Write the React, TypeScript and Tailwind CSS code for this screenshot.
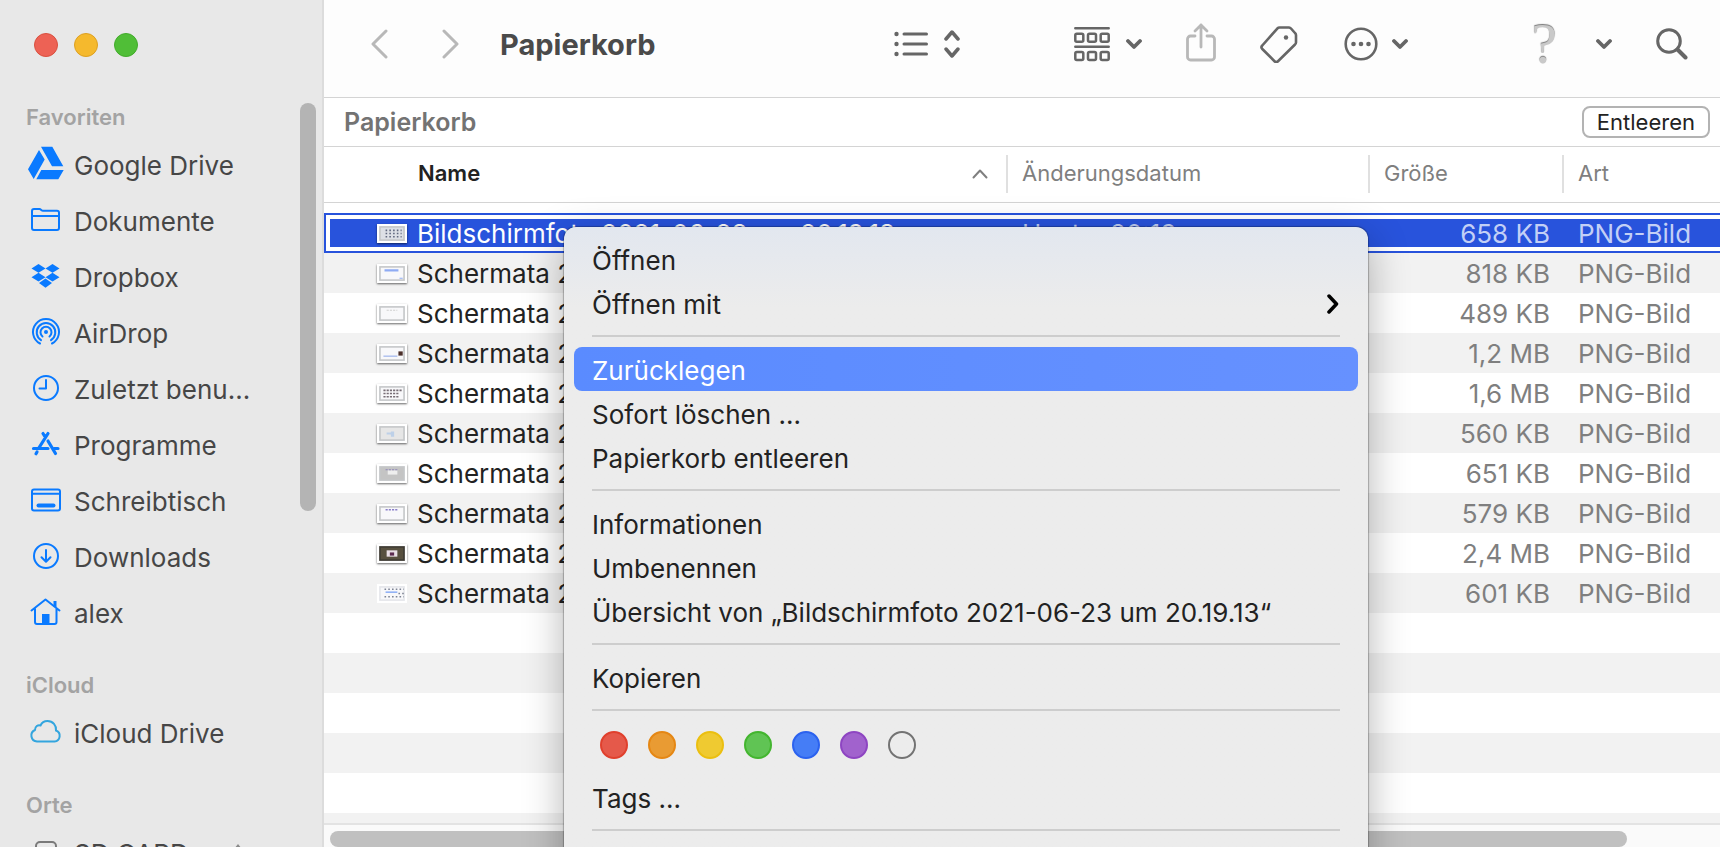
import type { ReactNode } from "react";

const favorites = [
  { label: "Google Drive", icon: <GoogleDriveIcon /> },
  { label: "Dokumente", icon: <FolderIcon /> },
  { label: "Dropbox", icon: <DropboxIcon /> },
  { label: "AirDrop", icon: <AirDropIcon /> },
  { label: "Zuletzt benu...", icon: <ClockIcon /> },
  { label: "Programme", icon: <AppsIcon /> },
  { label: "Schreibtisch", icon: <DesktopIcon /> },
  { label: "Downloads", icon: <DownloadIcon /> },
  { label: "alex", icon: <HomeIcon /> },
];

const files = [
  { name: "Bildschirmfoto 2021-06-23 um 20.19.13", date: "Heute, 20:19", size: "658 KB", thumb: "grid" },
  { name: "Schermata 2021-06-23 um 20.16.02", date: "Heute, 20:16", size: "818 KB", thumb: "bar" },
  { name: "Schermata 2021-06-23 um 20.14.41", date: "Heute, 20:14", size: "489 KB", thumb: "plain" },
  { name: "Schermata 2021-06-23 um 20.12.27", date: "Heute, 20:12", size: "1,2 MB", thumb: "photo" },
  { name: "Schermata 2021-06-23 um 20.11.50", date: "Heute, 20:11", size: "1,6 MB", thumb: "apps" },
  { name: "Schermata 2021-06-23 um 20.09.33", date: "Heute, 20:09", size: "560 KB", thumb: "pale" },
  { name: "Schermata 2021-06-23 um 20.08.18", date: "Heute, 20:08", size: "651 KB", thumb: "gray" },
  { name: "Schermata 2021-06-23 um 20.07.05", date: "Heute, 20:07", size: "579 KB", thumb: "dots" },
  { name: "Schermata 2021-06-23 um 20.05.44", date: "Heute, 20:05", size: "2,4 MB", thumb: "dark" },
  { name: "Schermata 2021-06-23 um 20.03.12", date: "Heute, 20:03", size: "601 KB", thumb: "menu" },
];

const tags = [
  { label: "Rot", color: "bg-[#e5594a] border-[#e0402d]" },
  { label: "Orange", color: "bg-[#e99b33] border-[#e58714]" },
  { label: "Gelb", color: "bg-[#efca31] border-[#ebbf10]" },
  { label: "Grün", color: "bg-[#60c454] border-[#43b52f]" },
  { label: "Blau", color: "bg-[#457df6] border-[#2b62ef]" },
  { label: "Violett", color: "bg-[#a162cd] border-[#8e45c2]" },
  { label: "Kein Tag", color: "border-[#737373]" },
];

export default function App() {
  return (
    <div className="flex h-screen overflow-hidden bg-white font-[Inter,sans-serif] text-[#262626]">
      <Sidebar />
      <main className="flex min-w-0 flex-1 flex-col">
        <Toolbar />
        <div className="flex h-[49px] shrink-0 items-center justify-between border-b border-[#d4d4d4] pr-2.5 pl-5">
          <h2 className="pt-0.5 text-[25px] font-semibold text-[#737373]">Papierkorb</h2>
          <button className="h-8 rounded-lg border-2 border-[#b3b3b3] px-[13px] text-[22px] leading-7 text-[#222]">
            Entleeren
          </button>
        </div>
        <FileTable />
        <div className="h-6 shrink-0 border-t-2 border-[#e3e3e3] bg-[#fafafa] pt-1.5 pl-1.5">
          <div className="h-4 w-14/15 rounded-full bg-[#c0c0c0]" />
        </div>
      </main>
      <ContextMenu />
    </div>
  );
}

function Sidebar() {
  return (
    <aside className="relative w-[324px] shrink-0 overflow-hidden border-r-2 border-[#dcdcdc] bg-[#e8e8e8]">
      <div className="flex gap-4 pt-[33px] pb-[41px] pl-[34px]">
        <button aria-label="Schließen" className="size-6 rounded-full border border-[#d9503f] bg-[#ed6255]" />
        <button aria-label="Minimieren" className="size-6 rounded-full border border-[#dda021] bg-[#f5b92d]" />
        <button aria-label="Zoomen" className="size-6 rounded-full border border-[#42ab2b] bg-[#50be37]" />
      </div>
      <nav className="flex flex-col gap-[26px]">
        <Section title="Favoriten">
          {favorites.map((item) => (
            <SidebarItem key={item.label} icon={item.icon} label={item.label} />
          ))}
        </Section>
        <Section title="iCloud">
          <SidebarItem icon={<CloudIcon />} label="iCloud Drive" />
        </Section>
        <Section title="Orte">
          <SidebarItem icon={<DiskIcon />} label="SD CARD">
            <svg width="20" height="20" viewBox="0 0 20 20" fill="#8a8a8a" className="mr-[74px] ml-auto">
              <path d="M10 2l8 10H2zM2 14h16v3H2z" />
            </svg>
          </SidebarItem>
        </Section>
      </nav>
      <div className="absolute top-[103px] right-[6px] h-[408px] w-4 rounded-full bg-[#b4b4b4]" />
    </aside>
  );
}

function Section({ title, children }: { title: string; children: ReactNode }) {
  return (
    <section>
      <h3 className="flex h-[38px] items-center pl-[26px] text-[22px] font-semibold text-[#a3a3a3]">{title}</h3>
      <ul>{children}</ul>
    </section>
  );
}

function SidebarItem({ icon, label, children }: { icon: ReactNode; label: string; children?: ReactNode }) {
  return (
    <li>
      <a href="#" className="flex h-14 items-center gap-[9px] pl-7 text-[26px] text-[#464646]">
        {icon}
        <span className="pt-0.5">{label}</span>
        {children}
      </a>
    </li>
  );
}

function Toolbar() {
  return (
    <header className="flex h-[98px] shrink-0 items-center border-b border-[#d4d4d4] bg-[#fdfdfd] pr-8 pb-2.5 pl-[46px] text-[#666]">
      <button aria-label="Zurück" className="text-[#b8b8b8]">
        <svg width="18" height="32" viewBox="0 0 18 32" {...line} strokeWidth="3">
          <path d="M16 3L3 16l13 13" />
        </svg>
      </button>
      <button aria-label="Vorwärts" className="ml-[54px] text-[#b8b8b8]">
        <svg width="18" height="32" viewBox="0 0 18 32" {...line} strokeWidth="3">
          <path d="M2 3l13 13L2 29" />
        </svg>
      </button>
      <h1 className="ml-10 pt-0.5 text-[29px] font-bold text-[#4a4a4a]">Papierkorb</h1>

      <button aria-label="Darstellung" className="ml-auto flex items-center gap-4">
        <svg width="34" height="28" viewBox="0 0 34 28" {...line} strokeWidth="3">
          <path d="M10 4h22.500M10 14h22.500M10 24h22.500" />
          <g fill="currentColor" stroke="none">
            <circle cx="2.500" cy="4" r="2.200" />
            <circle cx="2.500" cy="14" r="2.200" />
            <circle cx="2.500" cy="24" r="2.200" />
          </g>
        </svg>
        <svg width="16" height="28" viewBox="0 0 16 28" {...line} strokeWidth="3.500">
          <path d="M2 9l6-7 6 7M2 19l6 7 6-7" />
        </svg>
      </button>
      <button aria-label="Gruppieren" className="ml-[114px] flex items-center gap-4">
        <svg width="36" height="36" viewBox="0 0 36 36" {...line} strokeWidth="2.500">
          <path d="M1.300 2.300h33.400M1.300 20.800h33.400" />
          <rect x="1.300" y="7.800" width="8" height="8" rx="1.500" />
          <rect x="14" y="7.800" width="8" height="8" rx="1.500" />
          <rect x="26.700" y="7.800" width="8" height="8" rx="1.500" />
          <rect x="1.300" y="26" width="8" height="8" rx="1.500" />
          <rect x="14" y="26" width="8" height="8" rx="1.500" />
          <rect x="26.700" y="26" width="8" height="8" rx="1.500" />
        </svg>
        <ChevronDown />
      </button>
      <button aria-label="Teilen" className="ml-11 pb-1 text-[#b8b8b8]">
        <svg width="30" height="40" viewBox="0 0 30 40" {...line} strokeWidth="2.800">
          <path d="M9 14H4.500a3 3 0 0 0-3 3v18a3 3 0 0 0 3 3h21a3 3 0 0 0 3-3V17a3 3 0 0 0-3-3H21" />
          <path d="M15 25V3M9 9l6-6 6 6" />
        </svg>
      </button>
      <button aria-label="Tags" className="ml-11">
        <svg width="38" height="38" viewBox="0 0 38 38" {...line} strokeWidth="2.600">
          <path d="M19.500 2.500h9.500a3 3 0 0 1 2 1l4 4.500a3 3 0 0 1 1 2v7.500a3 3 0 0 1-1 2L18 36.200a2.500 2.500 0 0 1-3.500 0L2.300 24a2.500 2.500 0 0 1 0-3.500L17.500 3.300a3 3 0 0 1 2-.8z" />
          <circle cx="26" cy="12.500" r="2.200" fill="currentColor" stroke="none" />
        </svg>
      </button>
      <button aria-label="Aktionen" className="ml-[46px] flex items-center gap-3.5">
        <svg width="34" height="34" viewBox="0 0 34 34" {...line} strokeWidth="2.600">
          <circle cx="17" cy="17" r="15.300" />
          <g fill="currentColor" stroke="none">
            <circle cx="9.500" cy="17" r="2.300" />
            <circle cx="17" cy="17" r="2.300" />
            <circle cx="24.500" cy="17" r="2.300" />
          </g>
        </svg>
        <ChevronDown />
      </button>
      <button
        aria-label="Hilfe"
        className="ml-[120px] w-8 font-['Liberation_Serif',serif] text-[58px] leading-10 text-[#c9c9c9] [text-shadow:0_-1px_1px_#777]"
      >
        ?
      </button>
      <button aria-label="Weitere" className="ml-9">
        <ChevronDown />
      </button>
      <button aria-label="Suchen" className="ml-11">
        <svg width="32" height="34" viewBox="0 0 32 34" {...line} strokeWidth="3">
          <circle cx="13" cy="14" r="11.300" />
          <path d="M21.500 22.500l8 8" strokeWidth="4" />
        </svg>
      </button>
    </header>
  );
}

function FileTable() {
  return (
    <div className="min-h-0 flex-1 overflow-hidden">
      <table className="w-full table-fixed border-separate border-spacing-0 text-left text-[26px] text-[#7f7f7f]">
        <thead className="text-[22px]">
          <tr className="h-14">
            <th className="border-b border-[#d4d4d4] p-0 pb-0.5 font-semibold text-[#222]">
              <div className="flex items-center justify-between pr-[18px] pl-[94px]">
                Name
                <svg width="16" height="10" viewBox="0 0 16 10" {...line} strokeWidth="2" className="text-[#7f7f7f]">
                  <path d="M1.500 8.500L8 1.500l6.500 7" />
                </svg>
              </div>
            </th>
            <HeaderCell width="w-[362px]">Änderungsdatum</HeaderCell>
            <HeaderCell width="w-[194px]">Größe</HeaderCell>
            <HeaderCell width="w-[158px]">Art</HeaderCell>
          </tr>
        </thead>
        <tbody>
          <tr className="h-2.5" aria-hidden="true">
            <td colSpan={4} className="p-0" />
          </tr>
          {files.map((file, i) =>
            i === 0 ? (
              <tr key={file.name} className="h-10 leading-[30px] text-[#c3d0f6]">
                <td className="border-y-2 border-l-2 border-[#2853dc] py-1 pr-0 pl-1">
                  <div className="flex h-7 items-center gap-2.5 bg-[#2853dc] pl-[47px] whitespace-nowrap text-white">
                    <Thumb kind={file.thumb} />
                    <span className="pt-0.5">{file.name}</span>
                  </div>
                </td>
                <td className="border-y-2 border-[#2853dc] px-0 py-1">
                  <div className="h-7 bg-[#2853dc] pl-4">{file.date}</div>
                </td>
                <td className="border-y-2 border-[#2853dc] px-0 py-1">
                  <div className="h-7 bg-[#2853dc] pr-3 text-right">{file.size}</div>
                </td>
                <td className="border-y-2 border-[#2853dc] px-0 py-1">
                  <div className="h-7 bg-[#2853dc] pl-4">PNG-Bild</div>
                </td>
              </tr>
            ) : (
              <tr key={file.name} className="h-10 leading-7 odd:bg-[#f2f2f2]">
                <td className="p-0">
                  <div className="flex items-center gap-2.5 pl-[53px] whitespace-nowrap text-[#222]">
                    <Thumb kind={file.thumb} />
                    <span className="pt-0.5">{file.name}</span>
                  </div>
                </td>
                <td className="pt-0.5 pb-0 pl-4">{file.date}</td>
                <td className="pt-0.5 pr-3 pb-0 text-right">{file.size}</td>
                <td className="pt-0.5 pr-0 pb-0 pl-4">PNG-Bild</td>
              </tr>
            ),
          )}
          {[0, 1, 2, 3, 4, 5].map((n) => (
            <tr key={n} className="h-10 odd:bg-[#f2f2f2]" aria-hidden="true">
              <td colSpan={4} className="p-0" />
            </tr>
          ))}
        </tbody>
      </table>
    </div>
  );
}

function HeaderCell({ width, children }: { width: string; children: ReactNode }) {
  return (
    <th className={`border-b border-[#d4d4d4] p-0 pb-0.5 font-normal ${width}`}>
      <div className="h-[38px] border-l-2 border-[#e0e0e0] pl-3.5 leading-9">{children}</div>
    </th>
  );
}

function ContextMenu() {
  return (
    <div
      role="menu"
      className="absolute top-[227px] left-[564px] h-[660px] w-[804px] rounded-xl bg-[#ececec] bg-linear-to-b from-[#e2e7ef] to-[#ececec] to-[80px] px-2.5 pt-2.5 text-[26px] shadow-[0_0_1px_1px_rgba(0,0,0,0.25),0_12px_40px_rgba(0,0,0,0.3)]"
    >
      <MenuItem>Öffnen</MenuItem>
      <MenuItem>
        Öffnen mit
        <svg width="13" height="22" viewBox="0 0 13 22" {...line} strokeWidth="3.500" className="text-black">
          <path d="M2 3l7.500 8L2 19" />
        </svg>
      </MenuItem>
      <Separator />
      <button
        role="menuitem"
        className="flex h-11 w-full items-center rounded-lg bg-linear-to-r from-[#5a8bff] to-[#6691ff] px-[18px] pt-0.5 text-white"
      >
        Zurücklegen
      </button>
      <MenuItem>Sofort löschen ...</MenuItem>
      <MenuItem>Papierkorb entleeren</MenuItem>
      <Separator />
      <MenuItem>Informationen</MenuItem>
      <MenuItem>Umbenennen</MenuItem>
      <MenuItem>Übersicht von „Bildschirmfoto 2021-06-23 um 20.19.13“</MenuItem>
      <Separator />
      <MenuItem>Kopieren</MenuItem>
      <Separator />
      <div className="flex gap-5 px-[26px] pt-2.5 pb-4">
        {tags.map((tag) => (
          <button key={tag.label} aria-label={tag.label} className={`size-7 rounded-full border-2 ${tag.color}`} />
        ))}
      </div>
      <MenuItem>Tags ...</MenuItem>
      <Separator />
    </div>
  );
}

function MenuItem({ children }: { children: ReactNode }) {
  return (
    <button role="menuitem" className="flex h-11 w-full items-center justify-between px-[18px] pt-0.5 text-[#222]">
      {children}
    </button>
  );
}

function Separator() {
  return <hr className="mx-[18px] my-2.5 border-t-2 border-[#cdcdcd]" />;
}

// shared stroke settings for outline icons
const line = {
  fill: "none",
  stroke: "currentColor",
  strokeLinecap: "round",
  strokeLinejoin: "round",
} as const;

function ChevronDown() {
  return (
    <svg width="16" height="12" viewBox="0 0 16 12" {...line} strokeWidth="3.800">
      <path d="M2 3l6 6 6-6" />
    </svg>
  );
}

function SideIcon({ children }: { children: ReactNode }) {
  return (
    <svg
      width="37"
      height="36"
      viewBox="0 0 37 36"
      fill="none"
      stroke="currentColor"
      strokeWidth="2"
      strokeLinecap="round"
      strokeLinejoin="round"
      className="shrink-0 text-[#0a7aff]"
    >
      {children}
    </svg>
  );
}

function GoogleDriveIcon() {
  return (
    <SideIcon>
      <g fill="currentColor" stroke="none">
        <path d="M13 .7h11.300l11 19.600H24zM11 4l5.700 9.500L5.700 33 0 23.300zM13.300 24h22.400l-5.400 9.300H8.300z" />
      </g>
    </SideIcon>
  );
}

function FolderIcon() {
  return (
    <SideIcon>
      <path d="M4 10V9a2 2 0 0 1 2-2h5.500c1.500 0 2 1.800 3.500 1.800h14a2 2 0 0 1 2 2V26a2 2 0 0 1-2 2H6a2 2 0 0 1-2-2zM4 14h27" />
    </SideIcon>
  );
}

function DropboxIcon() {
  return (
    <SideIcon>
      <g fill="currentColor" stroke="none">
        <path d="M10.500 6l7 4.400-7 4.400-7-4.400zM24.500 6l7 4.400-7 4.400-7-4.400zM10.500 14.800l7 4.400-7 4.400-7-4.400zM24.500 14.800l7 4.400-7 4.400-7-4.400zM17.500 20.600l6.500 4.400-6.500 4.700L11 25z" />
      </g>
    </SideIcon>
  );
}

function AirDropIcon() {
  return (
    <SideIcon>
      <path d="M12 29.500a13 13 0 1 1 12 0M13 26.200a9.300 9.300 0 1 1 10 0M14.500 22.500a5.500 5.500 0 1 1 7 0" />
      <circle cx="18" cy="18" r="2" fill="currentColor" stroke="none" />
    </SideIcon>
  );
}

function ClockIcon() {
  return (
    <SideIcon>
      <circle cx="18" cy="18" r="12" />
      <path d="M18 10v8.500h-6.500" />
    </SideIcon>
  );
}

function AppsIcon() {
  return (
    <SideIcon>
      <path strokeWidth="3.200" d="M20 7.500L10.500 22.500M15 7.500l2.500 4M20 15l7.500 12.500M5.500 22.500H20M26 22.500h4M9 26l-1 1.700" />
    </SideIcon>
  );
}

function DesktopIcon() {
  return (
    <SideIcon>
      <rect x="4" y="7.500" width="28" height="21" rx="2" />
      <path d="M4 11.800h28" />
      <path strokeWidth="4" d="M10.500 23.500h15" />
    </SideIcon>
  );
}

function DownloadIcon() {
  return (
    <SideIcon>
      <circle cx="18" cy="18" r="12" />
      <path d="M18 12v11.500M13.500 19.200l4.500 4.500 4.500-4.500" />
    </SideIcon>
  );
}

function HomeIcon() {
  return (
    <SideIcon>
      <path d="M3.500 16.500L17.500 5.500l14 11M7 15v13a2 2 0 0 0 2 2h17.500a2 2 0 0 0 2-2V15" />
      <path strokeWidth="3" strokeLinecap="butt" d="M27 7v6" />
      <path fill="currentColor" stroke="none" d="M14 20h7.500v10H14z" />
    </SideIcon>
  );
}

function CloudIcon() {
  return (
    <SideIcon>
      <path
        stroke="#33a5de"
        d="M9 27.500a6 6 0 0 1-2-11.500c0-3.500 3-5.500 5.500-4.500C14 8 16.500 7 19.500 7c5.500 0 9 4.500 8.500 9.500a5.700 5.700 0 0 1-1.500 11z"
      />
    </SideIcon>
  );
}

function DiskIcon() {
  return (
    <SideIcon>
      <rect x="8" y="8" width="20" height="22" rx="4" stroke="#7a7a7a" />
    </SideIcon>
  );
}

function Thumb({ kind }: { kind: string }) {
  const frame = kind === "dark" ? "#3d3a33" : kind === "menu" ? "#e4e6ea" : "#c4c6c8";
  const screen = kind === "dark" ? "#57503f" : kind === "gray" ? "#c4c4c4" : kind === "grid" ? "#dde0e6" : kind === "pale" ? "#e6e6e6" : "#f8f8fa";
  return (
    <svg
      width="30"
      height="19"
      viewBox="0 0 28 18"
      preserveAspectRatio="none"
      className={`shrink-0 ${kind === "menu" ? "" : "shadow-[0_1px_2px_rgba(0,0,0,0.6)]"}`}
    >
      <path fill="#fff" d="M0 0h28v18H0z" />
      <path fill={frame} d="M2 2h24v14H2z" />
      <path fill={screen} d="M3.500 3.500h21v11h-21z" />
      {kind === "grid" && (
        <path stroke="#626a80" strokeWidth="1.500" strokeDasharray="1.500 2" d="M8 6h15M8 9h15M8 12h15" />
      )}
      {kind === "bar" && <path fill="#8fabf3" d="M7 5h13v2H7zM21 13h3v1h-3z" />}
      {kind === "plain" && <path stroke="#d0d0d0" strokeDasharray="2 1" d="M9 6h10" />}
      {kind === "photo" && (
        <>
          <path fill="#91a9ea" d="M6 11h13v1H6z" />
          <path fill="#4b2f2a" d="M20 7h4v4h-4z" />
        </>
      )}
      {kind === "apps" && (
        <path stroke="#776d75" strokeWidth="1.500" strokeDasharray="2 1" d="M6 6h18M6 9h15M6 12h15" />
      )}
      {kind === "pale" && <path fill="#bdd0e8" d="M9 8h4v-1h3v5h-3v-2H9z" />}
      {kind === "gray" && (
        <>
          <path fill="#eee" d="M10 6h9v4h-9z" />
          <path stroke="#8f86b8" strokeDasharray="2 1" d="M8 5.500h12" />
        </>
      )}
      {kind === "dots" && <path stroke="#8a7fc9" strokeWidth="1.500" strokeDasharray="2 1" d="M8 5.500h12" />}
      {kind === "dark" && (
        <>
          <path fill="#e9dfe6" d="M9 6h10v6H9z" />
          <path fill="#5b2a4f" d="M12 8h4v3h-4z" />
        </>
      )}
      {kind === "menu" && (
        <>
          <path stroke="#7e8494" strokeWidth="1.500" strokeDasharray="1.500 2" d="M7 5h18M20 9h5M7 12h18" />
          <path fill="#8fb0f5" d="M8 7h11v1.500H8z" />
        </>
      )}
    </svg>
  );
}
